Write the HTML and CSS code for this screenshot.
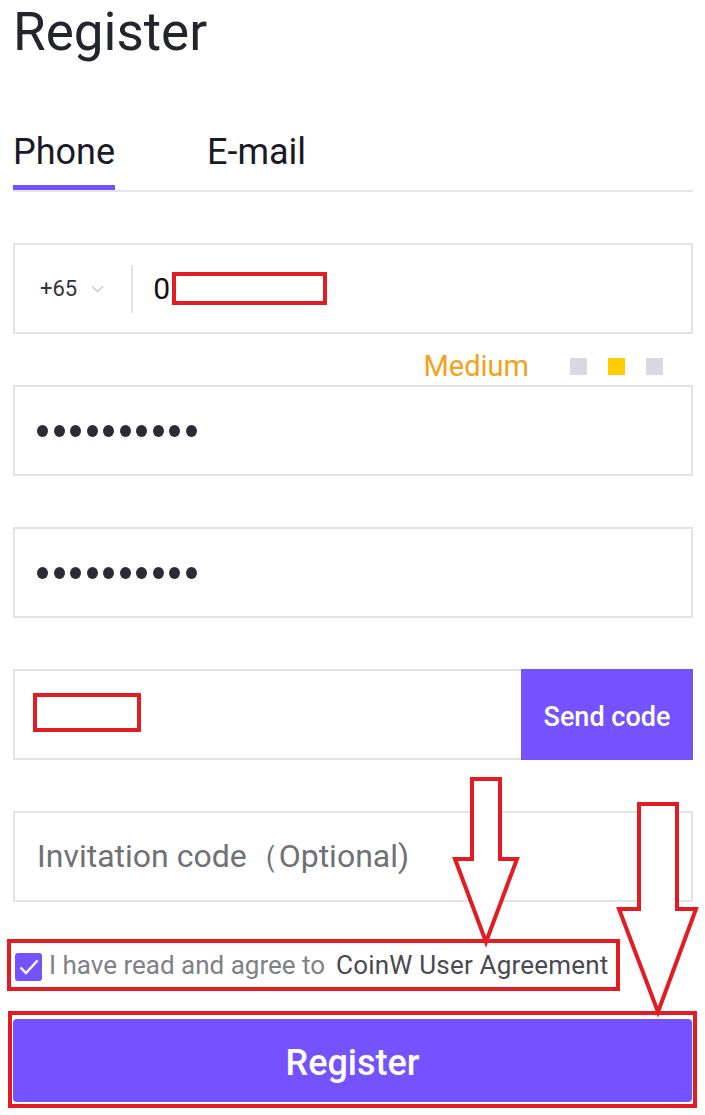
FILE: index.html
```html
<!DOCTYPE html>
<html lang="en">
<head>
  <meta charset="UTF-8" />
  <meta name="viewport" content="width=device-width, initial-scale=1" />
  <title>Register</title>
  <link rel="stylesheet" href="styles.css">
</head>
<body>
  <main class="page">
    <h1 class="title">Register</h1>

    <nav class="tabs">
      <a class="tab active">Phone</a>
      <a class="tab">E-mail</a>
    </nav>

    <form class="form">
      <div class="field phone">
        <div class="area">
          +65
          <svg class="chevron" width="13" height="8" viewBox="0 0 13 8">
            <path d="M1 1.5 L6.5 6.5 L12 1.5" fill="none" stroke="#c9c9d6" stroke-width="1.4" />
          </svg>
        </div>
        <span class="sep"></span>
        <div class="value">0<span class="mark mark-phone"></span></div>
      </div>

      <div class="strength">
        <span class="level">Medium</span>
        <span class="bar"></span>
        <span class="bar on"></span>
        <span class="bar"></span>
      </div>

      <div class="field">
        <div class="dots">
          <i></i><i></i><i></i><i></i><i></i><i></i><i></i><i></i><i></i><i></i>
        </div>
      </div>

      <div class="field gap">
        <div class="dots">
          <i></i><i></i><i></i><i></i><i></i><i></i><i></i><i></i><i></i><i></i>
        </div>
      </div>

      <div class="field gap code">
        <span class="mark mark-code"></span>
        <button type="button" class="send">Send code</button>
      </div>

      <div class="field gap">
        <span class="placeholder">Invitation code（Optional)</span>
      </div>

      <label class="agree">
        <span class="check">
          <svg width="22" height="18" viewBox="0 0 22 18">
            <path d="M2.5 9.5 L8 15 L19.5 2.5" fill="none" stroke="#fff" stroke-width="2.4" />
          </svg>
        </span>
        <span class="agree-text">I have read and agree to</span>
        <span class="agree-link">CoinW User Agreement</span>
      </label>

      <div class="submit-wrap">
        <button type="button" class="submit">Register</button>
      </div>
    </form>

    <!-- annotation arrows drawn over the form -->
    <svg class="arrows" width="705" height="1115" viewBox="0 0 705 1115">
      <polygon points="472,773 500,773 500,853 517,853 486,936 455,853 472,853" />
      <polygon points="639,798 677,798 677,903 696,903 658,1006 619,903 639,903" />
    </svg>
  </main>
</body>
</html>
```

FILE: styles.css
```css
* {
  box-sizing: border-box;
}
body {
  margin: 0;
  background: #fff;
  font-family: Roboto, "Liberation Sans", sans-serif;
  color: #2e2e36;
}
.page {
  position: relative;
  width: 705px;
  min-height: 1115px;
  padding: 0 12px 0 13px;
}
.title {
  margin: 6px 0 0;
  font-size: 53px;
  line-height: 52px;
  font-weight: 400;
  color: #24242c;
}
.tabs {
  display: flex;
  gap: 92px;
  margin-top: 74px;
  border-bottom: 2px solid #e4e4ea;
}
.tab {
  font-size: 36px;
  line-height: 40px;
  font-weight: 400;
  color: #1a1a26;
  padding-bottom: 13px;
  border-bottom: 5px solid transparent;
}
.tab.active {
  border-color: #7452fe;
}
.form {
  display: flex;
  flex-direction: column;
  margin-top: 51px;
}
.field {
  display: flex;
  align-items: center;
  height: 91px;
  border: 2px solid #e3e3e6;
  padding-left: 22px;
}
.field.gap {
  margin-top: 51px;
}
.phone {
  padding-left: 25px;
}
.area {
  display: flex;
  align-items: center;
  font-size: 22px;
  color: #33333b;
}
.chevron {
  margin-left: 14px;
}
.sep {
  width: 2px;
  height: 48px;
  background: #e3e3e6;
  margin-left: 27px;
}
.value {
  display: flex;
  align-items: center;
  margin-left: 20px;
  font-size: 30px;
  color: #111;
}
.mark {
  display: inline-block;
  border: 4px solid #e31b23;
}
.mark-phone {
  width: 155px;
  height: 33px;
  margin-left: 2px;
}
.mark-code {
  width: 108px;
  height: 39px;
  margin-left: -4px;
  margin-top: -5px;
}
.strength {
  display: flex;
  align-items: center;
  justify-content: flex-end;
  height: 51px;
  padding: 13px 30px 0 0;
}
.level {
  font-size: 29px;
  line-height: 1;
  color: #f5a21b;
  margin-right: 41px;
}
.bar {
  width: 17px;
  height: 17px;
  background: #d9d9e3;
  margin-left: 21px;
}
.level + .bar {
  margin-left: 0;
}
.bar.on {
  background: #ffcc00;
}
.dots {
  display: flex;
  gap: 5.5px;
}
.dots i {
  width: 11px;
  height: 12px;
  border-radius: 50%;
  background: #2b2b33;
}
.code {
  padding-left: 22px;
}
.send {
  align-self: stretch;
  margin: -2px -2px -2px auto;
  width: 172px;
  border: none;
  background: #7452fe;
  color: #fff;
  font-family: inherit;
  font-size: 27px;
  font-weight: 500;
  padding-top: 6px;
}
.placeholder {
  font-size: 32px;
  color: #707077;
}
.agree {
  display: flex;
  align-items: center;
  margin: 37px 0 0 -6px;
  width: 613px;
  height: 52px;
  border: 4px solid #e31b23;
  padding-left: 4px;
}
.check {
  display: flex;
  align-items: center;
  justify-content: center;
  width: 27px;
  height: 28px;
  margin-top: 4px;
  border-radius: 3px;
  background: #7452fe;
}
.agree-text {
  margin-left: 7px;
  font-size: 26px;
  color: #808086;
}
.agree-link {
  margin-left: 11px;
  font-size: 26px;
  letter-spacing: 0.2px;
  color: #4a4a52;
}
.submit-wrap {
  margin: 20px 0 0 -5px;
  width: 689px;
  border: 4px solid #e31b23;
  padding: 4px 1px 2px;
}
.submit {
  display: block;
  width: 100%;
  height: 83px;
  border: none;
  border-radius: 4px;
  background: #7452fe;
  color: #fff;
  font-family: inherit;
  font-size: 36px;
  font-weight: 500;
  padding-top: 6px;
}
.arrows {
  position: absolute;
  top: 0;
  left: 0;
  pointer-events: none;
}
.arrows polygon {
  fill: #fff;
  stroke: #e31b23;
  stroke-width: 4;
  stroke-linejoin: miter;
}
```
